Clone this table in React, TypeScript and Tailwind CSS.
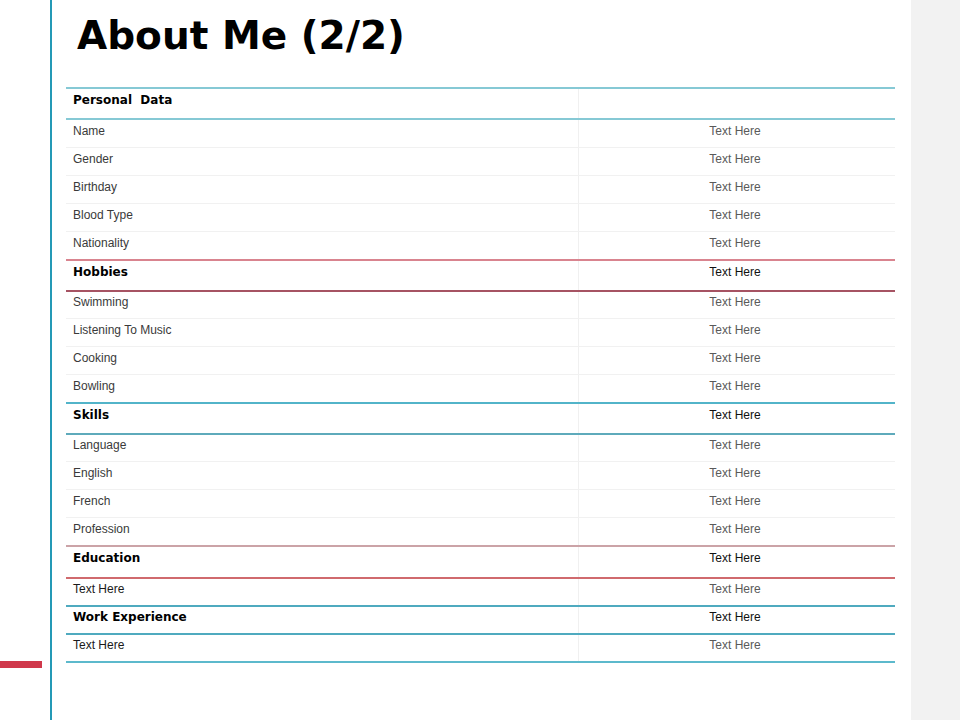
import React from 'react';

type Section = {
  title: string;
  value?: string;
  headerH: string;
  headerPad: string;
  topBorder: string;
  bottomBorder: string;
  rows: { label: string; h: string; pad: string; last?: boolean; dark?: boolean }[];
};

const sections: Section[] = [
  {
    title: 'Personal  Data',
    headerH: 'h-[33px]',
    headerPad: 'pt-[4px]',
    topBorder: 'border-t-[#86c9d5]',
    bottomBorder: 'border-b-[#86c9d5]',
    rows: [
      { label: 'Name', h: 'h-[28px]', pad: 'pt-[4px]' },
      { label: 'Gender', h: 'h-[28px]', pad: 'pt-[4px]' },
      { label: 'Birthday', h: 'h-[28px]', pad: 'pt-[4px]' },
      { label: 'Blood Type', h: 'h-[28px]', pad: 'pt-[4px]' },
      { label: 'Nationality', h: 'h-[27px]', pad: 'pt-[4px]', last: true },
    ],
  },
  {
    title: 'Hobbies',
    value: 'Text Here',
    headerH: 'h-[33px]',
    headerPad: 'pt-[4px]',
    topBorder: 'border-t-[#d9848f]',
    bottomBorder: 'border-b-[#a65363]',
    rows: [
      { label: 'Swimming', h: 'h-[27px]', pad: 'pt-[3px]' },
      { label: 'Listening To Music', h: 'h-[28px]', pad: 'pt-[4px]' },
      { label: 'Cooking', h: 'h-[28px]', pad: 'pt-[4px]' },
      { label: 'Bowling', h: 'h-[27px]', pad: 'pt-[4px]', last: true },
    ],
  },
  {
    title: 'Skills',
    value: 'Text Here',
    headerH: 'h-[33px]',
    headerPad: 'pt-[4px]',
    topBorder: 'border-t-[#52b4c9]',
    bottomBorder: 'border-b-[#5eaabb]',
    rows: [
      { label: 'Language', h: 'h-[27px]', pad: 'pt-[3px]' },
      { label: 'English', h: 'h-[28px]', pad: 'pt-[4px]' },
      { label: 'French', h: 'h-[28px]', pad: 'pt-[4px]' },
      { label: 'Profession', h: 'h-[27px]', pad: 'pt-[4px]', last: true },
    ],
  },
  {
    title: 'Education',
    value: 'Text Here',
    headerH: 'h-[34px]',
    headerPad: 'pt-[4px]',
    topBorder: 'border-t-[#cba3a7]',
    bottomBorder: 'border-b-[#d06a6e]',
    rows: [{ label: 'Text Here', h: 'h-[26px]', pad: 'pt-[3px]', last: true, dark: true }],
  },
  {
    title: 'Work Experience',
    value: 'Text Here',
    headerH: 'h-[30px]',
    headerPad: 'pt-[3px]',
    topBorder: 'border-t-[#4faabf]',
    bottomBorder: 'border-b-[#4faabf]',
    rows: [{ label: 'Text Here', h: 'h-[26px]', pad: 'pt-[3px]', last: true, dark: true }],
  },
];

const App = () => {
  return (
    <div className="w-[960px] h-[720px] flex bg-white overflow-hidden">
      <div className="w-[50px] pt-[661px]">
        <div className="w-[42px] h-[7px] bg-[#d0384b]" />
      </div>
      <div className="w-[2px] bg-[#2499b6]" />

      <main className="w-[859px]">
        <h1 className="ml-[25px] mt-[16px] text-[39px] leading-none font-bold text-black font-['DejaVu_Sans',sans-serif]">
          About Me (2/2)
        </h1>

        <div className="ml-[14px] mt-[32px] w-[829px] border-b-2 border-b-[#5cb9cc] text-[12px] leading-[14px] font-['Liberation_Sans',Arial,sans-serif]">
          {sections.map((s, i) => (
            <div key={i}>
              <div className={`flex border-t-2 border-b-2 ${s.headerH} ${s.topBorder} ${s.bottomBorder}`}>
                <div className={`w-[512px] pl-[7px] ${s.headerPad} font-bold text-black whitespace-pre font-['DejaVu_Sans',sans-serif]`}>
                  {s.title}
                </div>
                <div className={`flex-1 border-l border-l-[#f0f0f0] text-center pr-[4px] ${s.headerPad} text-[#111]`}>
                  {s.value}
                </div>
              </div>
              {s.rows.map((r, j) => (
                <div
                  key={j}
                  className={`flex ${r.h} ${r.last ? '' : 'border-b border-b-[#f1f1f1]'}`}
                >
                  <div className={`w-[512px] pl-[7px] ${r.pad} ${r.dark ? 'text-[#1a1a1a]' : 'text-[#3a3a3a]'}`}>
                    {r.label}
                  </div>
                  <div className={`flex-1 border-l border-l-[#f0f0f0] text-center pr-[4px] ${r.pad} text-[#5a5a5a]`}>
                    Text Here
                  </div>
                </div>
              ))}
            </div>
          ))}
        </div>
      </main>

      <div className="flex-1 bg-[#f2f2f2]" />
    </div>
  );
};

export default App;
